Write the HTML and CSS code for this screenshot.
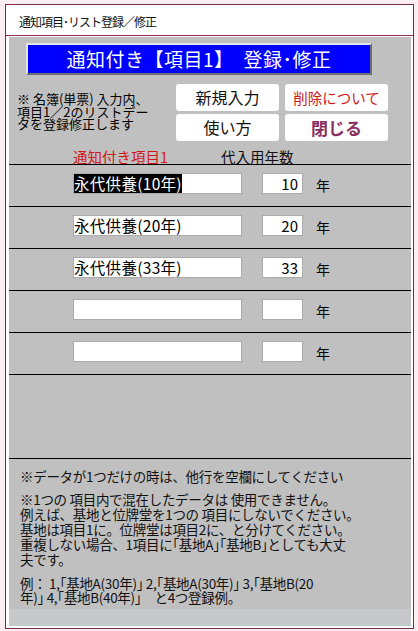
FILE: index.html
```
<!DOCTYPE html>
<html lang="ja">
<head>
<meta charset="utf-8">
<title>通知項目・リスト登録／修正</title>
<link rel="stylesheet" href="styles.css">
</head>
<body>
<div class="frame">
  <div class="titlebar">通知項目･リスト登録／修正</div>
  <div class="body">
    <div class="panel">
      <div class="banner">通知付き【項目1】　登録･修正</div>
      <div class="info">
        <p class="desc">※ 名簿(単票) 入力内、<br>項目1／2のリストデー<br>タを登録修正します</p>
        <div class="buttons">
          <button class="btn">新規入力</button>
          <button class="btn btn-red">削除について</button>
          <button class="btn">使い方</button>
          <button class="btn btn-close">閉じる</button>
        </div>
      </div>
      <div class="head">
        <span class="h-item">通知付き項目1</span>
        <span class="h-years">代入用年数</span>
      </div>
      <div class="row">
        <div class="field"><span class="sel">永代供養(10年)</span></div>
        <div class="num">10</div>
        <span class="unit">年</span>
      </div>
      <div class="row">
        <div class="field">永代供養(20年)</div>
        <div class="num">20</div>
        <span class="unit">年</span>
      </div>
      <div class="row">
        <div class="field">永代供養(33年)</div>
        <div class="num">33</div>
        <span class="unit">年</span>
      </div>
      <div class="row">
        <div class="field"></div>
        <div class="num"></div>
        <span class="unit">年</span>
      </div>
      <div class="row">
        <div class="field"></div>
        <div class="num"></div>
        <span class="unit">年</span>
      </div>
      <div class="spacer"></div>
      <div class="notes">
        <p class="note1">※データが1つだけの時は、他行を空欄にしてください</p>
        <p class="note2">※1つの 項目内で混在したデータは 使用できません。<br>例えば、基地と位牌堂を1つの 項目にしないでください。<br>基地は項目1に。位牌堂は項目2に、と分けてください。<br>重複しない場合、1項目に｢基地A｣｢基地B｣としても大丈<br>夫です。</p>
        <p class="note3">例： 1,｢基地A(30年)｣ 2,｢基地A(30年)｣ 3,｢基地B(20<br>年)｣ 4,｢基地B(40年)｣　と4つ登録例。</p>
      </div>
      <div class="strip"></div>
    </div>
  </div>
</div>
</body>
</html>
```
FILE: styles.css
```
html, body {
  margin: 0;
  padding: 0;
}
body {
  background: #fbeef2;
  font-family: "Noto Sans CJK JP", "Noto Sans", sans-serif;
  color: #000;
  width: 418px;
  height: 631px;
  overflow: hidden;
  padding-top: 4px;
  box-sizing: border-box;
}
.frame {
  margin-left: 5px;
  width: 409px;
  height: 625px;
  box-sizing: border-box;
  border: 1px solid #7d2a3c;
  background: #fff;
  display: flex;
  flex-direction: column;
}
.titlebar {
  height: 31px;
  box-sizing: border-box;
  border-bottom: 1px solid #8a3446;
  padding: 3px 0 0 13px;
  display: flex;
  align-items: center;
  font-size: 12px;
  letter-spacing: -1px;
  color: #111;
}
.body {
  padding: 1px 2px 2px 3px;
}
.panel {
  background: #c0c0c0;
  height: 589px;
  display: flex;
  flex-direction: column;
}
.banner {
  margin: 6px 0 0 17px;
  width: 346px;
  height: 32px;
  box-sizing: border-box;
  background: #0000ff;
  border-style: solid;
  border-width: 2px;
  border-color: #e4e4e4 #707070 #707070 #e4e4e4;
  color: #fff;
  font-size: 19px;
  line-height: 27px;
  text-align: center;
  letter-spacing: 0.5px;
}
.info {
  margin-top: 9px;
  display: flex;
}
.desc {
  margin: 9px 0 0 0;
  padding-left: 8px;
  width: 159px;
  font-size: 13px;
  line-height: 12.5px;
  letter-spacing: 0;
  white-space: nowrap;
}
.buttons {
  display: grid;
  grid-template-columns: 103px 103px;
  grid-template-rows: 27px 27px;
  column-gap: 6px;
  row-gap: 3px;
}
.btn {
  font-family: "Noto Sans CJK JP", "Noto Sans", sans-serif;
  background: #fff;
  border: none;
  border-radius: 3px;
  padding: 0;
  margin: 0;
  font-size: 16px;
  color: #111;
  line-height: 27px;
}
.btn-red {
  color: #d01818;
  font-size: 14.5px;
}
.btn-close {
  color: #8a3060;
  font-weight: bold;
  font-size: 17px;
}
.head {
  height: 23px;
  box-sizing: border-box;
  padding-top: 8px;
  display: flex;
  font-size: 14.5px;
  line-height: 16px;
}
.h-item {
  margin-left: 64px;
  width: 148px;
  color: #d01818;
}
.h-years {
  color: #111;
}
.row {
  border-top: 1px solid #000;
  height: 41px;
  display: flex;
  align-items: flex-start;
}
.field {
  margin: 8px 0 0 64px;
  width: 169px;
  height: 21px;
  box-sizing: border-box;
  background: #fff;
  border: 1px solid #ababab;
  font-size: 15.5px;
  line-height: 19px;
  white-space: nowrap;
  letter-spacing: 0.3px;
}
.sel {
  background: #000;
  color: #fff;
  display: inline-block;
  height: 19px;
}
.num {
  margin: 8px 0 0 20px;
  width: 41px;
  height: 21px;
  box-sizing: border-box;
  background: #fff;
  border: 1px solid #ababab;
  font-size: 15px;
  line-height: 19px;
  text-align: right;
  padding-right: 4px;
}
.unit {
  margin: 10px 0 0 13px;
  font-size: 14px;
  line-height: 20px;
}
.spacer {
  border-top: 1px solid #000;
  height: 83px;
}
.notes {
  border-top: 1px solid #000;
  padding: 9px 0 0 11px;
  font-size: 13.5px;
  letter-spacing: -0.3px;
  white-space: nowrap;
  color: #111;
}
.notes p {
  margin: 0;
}
.note1 {
  line-height: 16px;
}
.note2 {
  margin-top: 8px !important;
  line-height: 15px;
}
.note3 {
  margin-top: 9px !important;
  line-height: 14px;
}
.strip {
  margin-top: auto;
  height: 17px;
  background: #c6c8cc;
}
```
